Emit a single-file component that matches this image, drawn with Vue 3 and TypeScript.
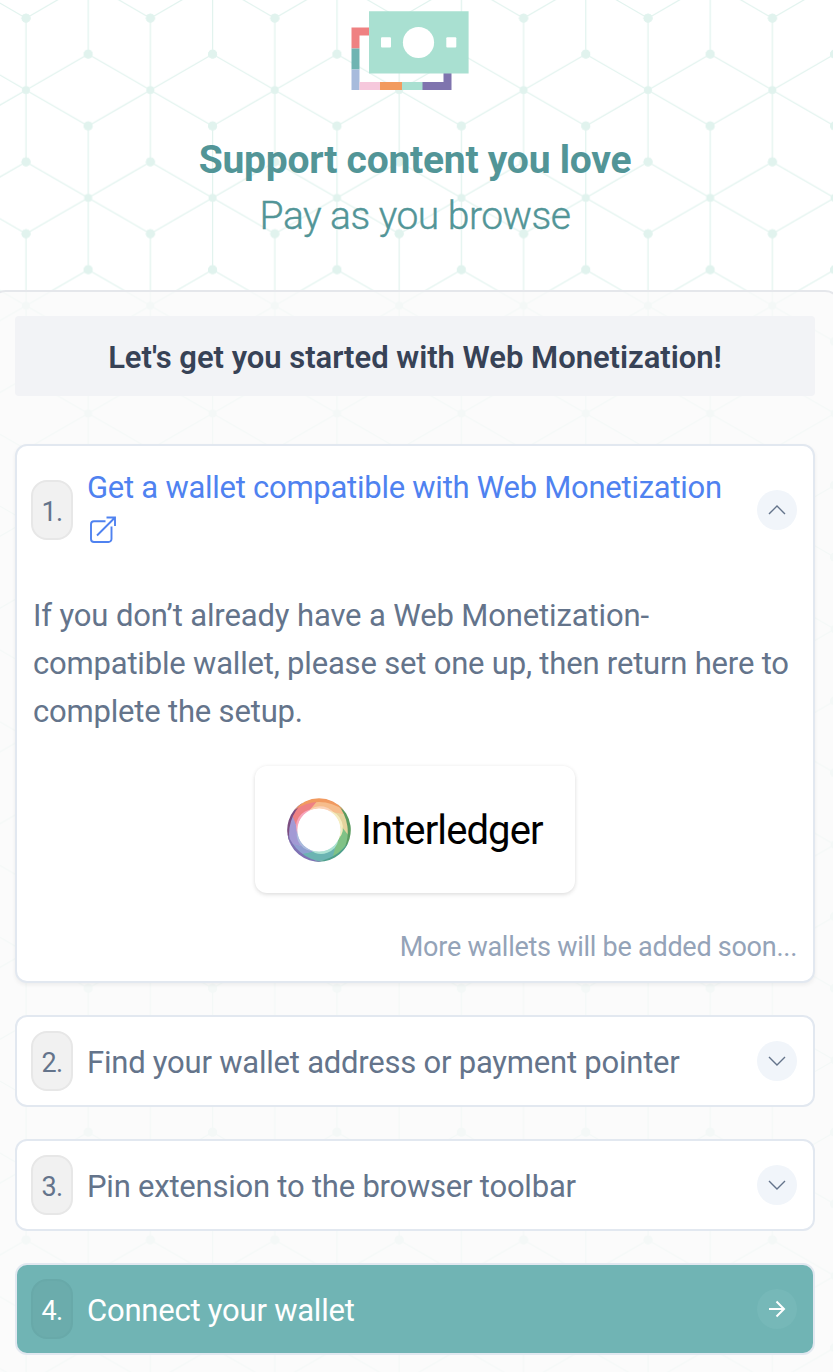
<script setup lang="ts">
interface Step {
  id: number
  label: string
  primary?: boolean
}

const steps: Step[] = [
  { id: 2, label: 'Find your wallet address or payment pointer' },
  { id: 3, label: 'Pin extension to the browser toolbar' },
  { id: 4, label: 'Connect your wallet', primary: true },
]

// Lattice: each tile holds two hubs with six spokes ending in small dots
const TW = 124.4
const TH = 215.6
const hubs = [
  [26, 90],
  [88.2, 197.8],
  [26 + TW, 90],
  [88.2 - TW, 197.8],
  [88.2, 197.8 - TH],
  [88.2 - TW, 197.8 - TH],
  [26, 90 + TH],
  [26 + TW, 90 + TH],
]
const spokes = [0, 60, 120, 180, 240, 300].map((d) => {
  const a = (d * Math.PI) / 180
  return [Math.sin(a) * 71.85, -Math.cos(a) * 71.85]
})

// Ring geometry, angles clockwise from twelve o'clock
const pt = (r: number, deg: number) => {
  const a = (deg * Math.PI) / 180
  return `${(32 + r * Math.sin(a)).toFixed(2)} ${(32 - r * Math.cos(a)).toFixed(2)}`
}
// Ends are slanted so neighbouring colours sweep into each other
const band = (a: number, b: number) =>
  `M${pt(31, a)}A31 31 0 0 1 ${pt(31, b)}L${pt(21.5, b - 28)}A21.5 21.5 0 0 0 ${pt(21.5, a - 28)}Z`
const crescent = (r: number, back: number, a: number, b: number) =>
  `M${pt(r, a)}A${r} ${r} 0 0 1 ${pt(r, b)}A${back} ${back} 0 0 0 ${pt(r, a)}Z`

type Arc = [number, number, string]
const mid: Arc[] = [
  [298, 362, '#ee8184'],
  [360, 422, '#f6bd8c'],
  [60, 104, '#e6d49e'],
  [102, 156, '#80c286'],
  [154, 220, '#6bb4b2'],
  [218, 246, '#8f9fd0'],
  [244, 300, '#a299d4'],
]
const outer: Arc[] = [
  [245, 330, '#7b4d80'],
  [35, 130, '#5b9b5f'],
  [110, 190, '#4e9f8c'],
  [175, 265, '#7f72b4'],
  [308, 412, '#f19a60'],
]
const inner: Arc[] = [
  [190, 275, '#aabbdd'],
  [258, 345, '#f7a6bd'],
  [328, 415, '#fbd3b8'],
  [25, 115, '#f6edc0'],
  [115, 205, '#ace2d3'],
]
</script>

<template>
  <div class="page">
    <svg class="lattice" width="833" height="1372" aria-hidden="true">
      <defs>
        <pattern id="lattice" :width="TW" :height="TH" patternUnits="userSpaceOnUse">
          <g v-for="(h, i) in hubs" :key="i" :transform="`translate(${h[0]} ${h[1]})`">
            <circle r="4" />
            <template v-for="(s, j) in spokes" :key="j">
              <line x1="0" y1="0" :x2="s[0]" :y2="s[1]" />
              <circle :cx="s[0]" :cy="s[1]" r="4.4" />
            </template>
          </g>
        </pattern>
      </defs>
      <rect width="833" height="1372" fill="url(#lattice)" />
    </svg>

    <header class="hero">
      <svg class="notes" width="118" height="80" viewBox="0 0 118 80">
        <path d="M.5 16.5H18V24.500H8.500V37.500H.5Z" fill="#ef8182" />
        <path d="M.5 37.500h8v21h-8z" fill="#6fb4b2" />
        <path d="M.5 58.500h8v20.500h-8z" fill="#a7bbdc" />
        <path d="M8.500 71h21v8h-21z" fill="#f6c8dc" />
        <path d="M29 71h22v8H29z" fill="#f29b5e" />
        <path d="M51 71h21v8H51z" fill="#a9e0d1" />
        <path d="M71.500 71h21V62h8v17h-29z" fill="#7f74ae" />
        <path d="M18 .2h99.600v62.300H18z" fill="#a9e0d1" />
        <circle cx="67.500" cy="31.500" r="15.600" fill="#fff" />
        <rect x="30" y="26.200" width="10" height="10.400" rx="1" fill="#fff" />
        <rect x="95.300" y="26.200" width="10" height="10.400" rx="1" fill="#fff" />
      </svg>
      <h1>Support content you love</h1>
      <p class="tagline">Pay as you browse</p>
    </header>

    <main class="panel">
      <h2 class="banner">Let's get you started with Web Monetization!</h2>

      <section class="card open">
        <div class="row">
          <span class="badge">1.</span>
          <a class="link">
            <span>Get a wallet compatible with Web Monetization</span>
            <svg width="30" height="30" viewBox="0 0 30 30" fill="none" stroke="#4f82f0" stroke-width="1.900">
              <path d="M18.500 7.200H7a3 3 0 0 0-3 3V25a3 3 0 0 0 3 3h14.500a3 3 0 0 0 3-3V12.500" />
              <path d="M10 21.500L27.500 4M19.500 3.500H28V12" />
            </svg>
          </a>
          <span class="toggle">
            <svg width="20" height="12" viewBox="0 0 20 12"><path d="M2 10l8-8 8 8" /></svg>
          </span>
        </div>
        <p class="body">
          <span class="first">If you don’t already have a Web Monetization-</span><br />compatible wallet, please set one up, then return here to<br />complete the setup.
        </p>
        <div class="wallet">
          <svg width="64" height="64" viewBox="0 0 64 64">
            <path v-for="(m, i) in mid" :key="'m' + i" :d="band(m[0], m[1])" :fill="m[2]" />
            <path v-for="(o, i) in outer" :key="'o' + i" :d="crescent(31.800, 42, o[0], o[1])" :fill="o[2]" />
            <path v-for="(n, i) in inner" :key="'n' + i" :d="crescent(21.500, 17.300, n[0], n[1])" :fill="n[2]" />
            <circle cx="32" cy="32" r="21.600" fill="#fff" />
          </svg>
          <span>Interledger</span>
        </div>
        <p class="more">More wallets will be added soon...</p>
      </section>

      <section v-for="s in steps" :key="s.id" class="card row" :class="{ primary: s.primary }">
        <span class="badge">{{ s.id }}.</span>
        <span class="label">{{ s.label }}</span>
        <span class="toggle">
          <svg v-if="s.primary" width="20" height="18" viewBox="0 0 20 18">
            <path d="M2 9h15M9.500 1.500L17 9l-7.500 7.500" />
          </svg>
          <svg v-else width="20" height="12" viewBox="0 0 20 12"><path d="M2 2l8 8 8-8" /></svg>
        </span>
      </section>
    </main>
  </div>
</template>

<style>
body {
  margin: 0;
  background: #fff;
}
</style>

<style scoped>
.page {
  position: relative;
  width: 833px;
  height: 1372px;
  overflow: hidden;
  font-family: Roboto, 'Liberation Sans', sans-serif;
  color: #64748b;
}
.lattice {
  position: absolute;
  inset: 0;
}
.lattice circle {
  fill: #e1f3ee;
}
.lattice line {
  stroke: #e1f3ee;
  stroke-width: 1.2;
}
.hero {
  position: relative;
  height: 290px;
  color: #529597;
  text-align: center;
}
.notes {
  display: block;
  margin: 0 auto 0 351px;
  padding-top: 11px;
}
h1,
.tagline {
  margin: 0;
  padding-right: 3px;
  font-size: 39px;
  line-height: 56px;
  font-weight: 700;
  letter-spacing: -0.25px;
}
h1 {
  margin-top: 41px;
}
.tagline {
  font-weight: 300;
  letter-spacing: -0.5px;
  -webkit-text-stroke: 0.4px #529597;
}
.panel {
  position: relative;
  display: flex;
  flex-direction: column;
  gap: 32px;
  box-sizing: border-box;
  width: 851px;
  height: 1120px;
  margin-left: -10px;
  padding: 24px 24px 0 23px;
  border: 2px solid #e5e7eb;
  border-radius: 16px;
  background: rgba(250, 250, 250, 0.75);
}
.banner {
  box-sizing: border-box;
  width: 800px;
  height: 80px;
  flex: none;
  margin: 0 0 16px;
  padding-top: 2px;
  border-radius: 4px;
  background: #f2f3f6;
  color: #374256;
  font-size: 31px;
  line-height: 80px;
  font-weight: 600;
  letter-spacing: -0.02px;
  text-align: center;
}
.card {
  box-sizing: border-box;
  width: 800px;
  flex: none;
  border: 2px solid #e2e8f0;
  border-radius: 12px;
  background: #fff;
}
.open {
  height: 539px;
  box-shadow: 0 2px 4px rgba(0, 0, 0, 0.06);
}
.row {
  display: flex;
  align-items: center;
  padding: 0 16px 0 14px;
}
.card.row {
  height: 92px;
}
.open .row {
  height: 128px;
}
.badge {
  display: flex;
  align-items: center;
  justify-content: center;
  box-sizing: border-box;
  width: 42px;
  height: 60px;
  flex: none;
  padding-top: 3px;
  border: 2px solid #e7e7e7;
  border-radius: 16px;
  background: #f1f1f1;
  font-size: 27px;
  letter-spacing: -0.6px;
}
.label,
.link {
  flex: 1;
  margin-left: 14px;
  font-size: 31px;
  line-height: 44px;
  letter-spacing: -0.26px;
  white-space: nowrap;
}
.label {
  padding-top: 4px;
  letter-spacing: -0.22px;
}
.link {
  display: flex;
  flex-direction: column;
  height: 88px;
  color: #4f82f0;
}
.link svg {
  margin-top: 4px;
}
.toggle {
  display: flex;
  align-items: center;
  justify-content: center;
  width: 40px;
  height: 40px;
  flex: none;
  border-radius: 50%;
  background: #f1f5fa;
}
.toggle path {
  fill: none;
  stroke: #64748b;
  stroke-width: 1.4;
}
.body {
  margin: 18px 16px 0;
  font-size: 31px;
  line-height: 48px;
  letter-spacing: -0.19px;
  white-space: nowrap;
}
.first {
  letter-spacing: -0.13px;
}
.wallet {
  display: flex;
  align-items: center;
  box-sizing: border-box;
  width: 320px;
  height: 127px;
  margin: 30px 0 0 238px;
  padding-left: 32px;
  border-radius: 12px;
  background: #fff;
  box-shadow: 0 2px 4px rgba(0, 0, 0, 0.1), 0 0 4px rgba(0, 0, 0, 0.05);
  color: #000;
  font-size: 40px;
  letter-spacing: -0.9px;
}
.wallet span {
  margin-left: 10px;
  padding-top: 2px;
}
.more {
  margin: 34px 16px 0;
  color: #94a3b8;
  font-size: 27px;
  line-height: 40px;
  letter-spacing: -0.26px;
  text-align: right;
}
.primary {
  background: #70b4b4;
  color: #fff;
}
.primary .badge {
  border-color: #68a9a9;
  background: #6bacac;
}
.primary .toggle {
  background: #76b8b8;
}
.primary .toggle path {
  stroke: #fff;
  stroke-width: 2;
}
</style>
